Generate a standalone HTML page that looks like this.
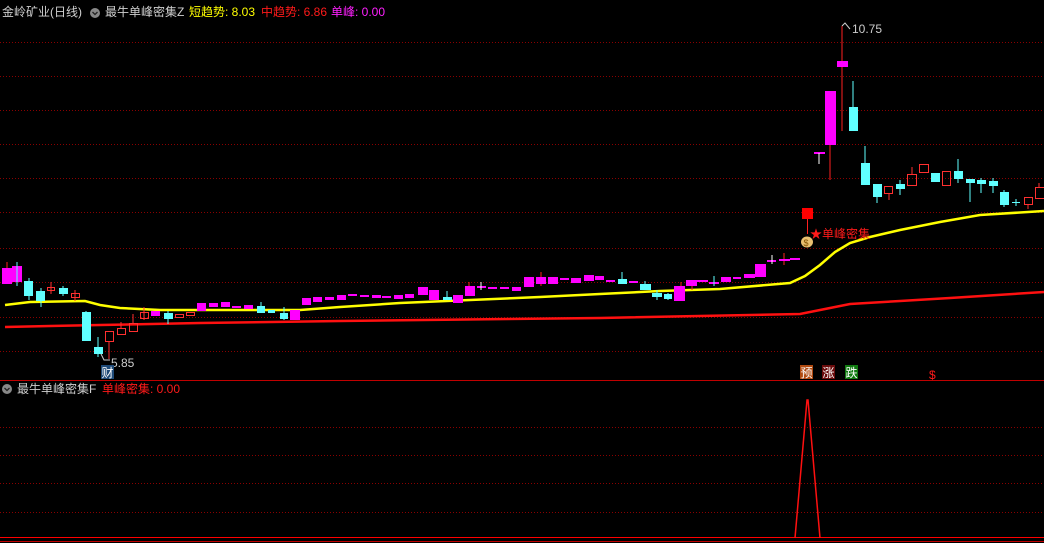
<!DOCTYPE html>
<html><head><meta charset="utf-8"><style>
html,body{margin:0;padding:0;background:#000;width:1044px;height:543px;overflow:hidden}
svg{display:block}
text{font-family:"Liberation Sans","Noto Sans CJK SC",sans-serif;font-size:12px}
</style></head><body>
<svg width="1044" height="543" viewBox="0 0 1044 543" xmlns="http://www.w3.org/2000/svg">
<g stroke="#8a0000" stroke-width="1" stroke-dasharray="1,2">
<line x1="0" y1="42.5" x2="1044" y2="42.5"/><line x1="0" y1="76.5" x2="1044" y2="76.5"/>
<line x1="0" y1="110.5" x2="1044" y2="110.5"/><line x1="0" y1="144.5" x2="1044" y2="144.5"/>
<line x1="0" y1="178.5" x2="1044" y2="178.5"/><line x1="0" y1="212.5" x2="1044" y2="212.5"/>
<line x1="0" y1="248.5" x2="1044" y2="248.5"/><line x1="0" y1="282.5" x2="1044" y2="282.5"/>
<line x1="0" y1="317.5" x2="1044" y2="317.5"/><line x1="0" y1="351.5" x2="1044" y2="351.5"/>
<line x1="0" y1="427.5" x2="1044" y2="427.5"/><line x1="0" y1="455.5" x2="1044" y2="455.5"/>
<line x1="0" y1="483.5" x2="1044" y2="483.5"/><line x1="0" y1="512.5" x2="1044" y2="512.5"/>
</g>
<line x1="0" y1="380.5" x2="1044" y2="380.5" stroke="#c00000"/>
<line x1="0" y1="537.5" x2="1044" y2="537.5" stroke="#ff0000"/>
<line x1="0" y1="541.5" x2="1044" y2="541.5" stroke="#c00000"/>

<polyline fill="none" stroke="#ffff00" stroke-width="2.5" points="5,305 30,302 85,301 100,305 120,308 160,310 300,310 340,307 400,303 470,300 540,297 600,294 660,291 720,289 790,283 805,276 820,265 835,252 850,243 870,237 900,230 940,222 980,215 1044,211"/>
<polyline fill="none" stroke="#ff1010" stroke-width="2.5" points="5,327 50,326 100,325 200,323 340,321 600,318 800,314 820,310 850,304 900,301 950,298 1044,292"/>

<g>
<g stroke="#ff2020" stroke-width="1">
<line x1="7" y1="262" x2="7" y2="268"/><line x1="842" y1="26" x2="842" y2="131"/><line x1="830" y1="145" x2="830" y2="180"/>
<line x1="469" y1="282" x2="469" y2="296"/><line x1="541" y1="272" x2="541" y2="286"/><line x1="784" y1="253" x2="784" y2="265"/>
<line x1="681" y1="282" x2="681" y2="301"/><line x1="692" y1="280" x2="692" y2="290"/>
</g>
<g fill="#ff00ff">
<rect x="2" y="268" width="10" height="16"/><rect x="12" y="266" width="10" height="16"/>
<rect x="151" y="311" width="9" height="5"/><rect x="197" y="303" width="9" height="8"/><rect x="209" y="303" width="9" height="4"/>
<rect x="221" y="302" width="9" height="5"/><rect x="232" y="306" width="9" height="2"/><rect x="244" y="305" width="9" height="4"/>
<rect x="290" y="310" width="10" height="10"/><rect x="302" y="298" width="9" height="7"/><rect x="313" y="297" width="9" height="5"/>
<rect x="325" y="297" width="9" height="3"/><rect x="337" y="295" width="9" height="5"/><rect x="348" y="294" width="9" height="2"/>
<rect x="360" y="295" width="9" height="2"/><rect x="372" y="295" width="9" height="3"/><rect x="382" y="296" width="9" height="2"/>
<rect x="394" y="295" width="9" height="4"/><rect x="405" y="294" width="9" height="4"/><rect x="418" y="287" width="10" height="8"/>
<rect x="429" y="290" width="10" height="10"/><rect x="453" y="295" width="10" height="8"/><rect x="465" y="286" width="10" height="10"/>
<rect x="477" y="286" width="9" height="2"/><rect x="488" y="287" width="9" height="2"/><rect x="500" y="287" width="9" height="2"/>
<rect x="512" y="287" width="9" height="4"/><rect x="524" y="277" width="10" height="10"/><rect x="536" y="277" width="10" height="7"/>
<rect x="548" y="277" width="10" height="7"/><rect x="560" y="278" width="9" height="2"/><rect x="571" y="278" width="10" height="5"/>
<rect x="584" y="275" width="10" height="6"/><rect x="595" y="276" width="9" height="4"/><rect x="606" y="280" width="9" height="2"/>
<rect x="629" y="281" width="9" height="2"/><rect x="674" y="286" width="11" height="15"/><rect x="686" y="280" width="11" height="6"/>
<rect x="697" y="280" width="11" height="2"/><rect x="709" y="282" width="10" height="2"/><rect x="721" y="277" width="10" height="5"/>
<rect x="733" y="277" width="8" height="2"/><rect x="744" y="274" width="11" height="4"/><rect x="755" y="264" width="11" height="13"/>
<rect x="767" y="260" width="9" height="2"/><rect x="779" y="259" width="11" height="2"/><rect x="790" y="258" width="10" height="2"/>
<rect x="814" y="152" width="11" height="2"/>
<rect x="825" y="91" width="11" height="54"/><rect x="837" y="61" width="11" height="6"/>
</g>
<g stroke="#60ffff" stroke-width="1">
<line x1="17" y1="262" x2="17" y2="286"/><line x1="29" y1="278" x2="29" y2="300"/><line x1="41" y1="288" x2="41" y2="307"/>
<line x1="63" y1="286" x2="63" y2="296"/><line x1="86" y1="311" x2="86" y2="341"/><line x1="98" y1="337" x2="98" y2="357"/>
<line x1="168" y1="311" x2="168" y2="324"/><line x1="261" y1="302" x2="261" y2="313"/><line x1="284" y1="307" x2="284" y2="320"/>
<line x1="447" y1="291" x2="447" y2="300"/><line x1="622" y1="272" x2="622" y2="284"/><line x1="645" y1="281" x2="645" y2="290"/>
<line x1="657" y1="290" x2="657" y2="300"/><line x1="668" y1="293" x2="668" y2="300"/><line x1="714" y1="276" x2="714" y2="286"/>
<line x1="853" y1="81" x2="853" y2="131"/><line x1="865" y1="146" x2="865" y2="185"/><line x1="877" y1="184" x2="877" y2="203"/>
<line x1="900" y1="180" x2="900" y2="195"/><line x1="958" y1="159" x2="958" y2="183"/><line x1="970" y1="179" x2="970" y2="202"/>
<line x1="981" y1="178" x2="981" y2="193"/><line x1="993" y1="178" x2="993" y2="193"/><line x1="1004" y1="190" x2="1004" y2="207"/>
<line x1="1016" y1="199" x2="1016" y2="206"/>
</g>
<g fill="#60ffff">
<rect x="24" y="281" width="9" height="15"/><rect x="36" y="291" width="9" height="10"/><rect x="59" y="288" width="9" height="6"/>
<rect x="82" y="312" width="9" height="29"/><rect x="94" y="347" width="9" height="7"/><rect x="164" y="313" width="9" height="6"/>
<rect x="257" y="306" width="8" height="7"/><rect x="268" y="310" width="7" height="3"/><rect x="280" y="313" width="8" height="6"/>
<rect x="443" y="297" width="9" height="3"/><rect x="618" y="279" width="9" height="5"/><rect x="640" y="284" width="11" height="6"/>
<rect x="652" y="293" width="10" height="4"/><rect x="664" y="294" width="8" height="5"/>
<rect x="849" y="107" width="9" height="24"/><rect x="861" y="163" width="9" height="22"/><rect x="873" y="184" width="9" height="13"/>
<rect x="896" y="184" width="9" height="5"/><rect x="931" y="173" width="9" height="9"/><rect x="954" y="171" width="9" height="8"/>
<rect x="966" y="179" width="9" height="4"/><rect x="977" y="180" width="9" height="4"/><rect x="989" y="181" width="9" height="5"/>
<rect x="1000" y="192" width="9" height="13"/><rect x="1012" y="202" width="8" height="1"/>
</g>
<g stroke="#ff3030" stroke-width="1" fill="none">
<line x1="51" y1="282" x2="51" y2="294"/><rect x="47.5" y="287.5" width="7" height="3"/>
<line x1="75" y1="290" x2="75" y2="301"/><rect x="71.5" y="293.5" width="8" height="4"/>
<line x1="109" y1="341" x2="109" y2="359"/><rect x="105.5" y="331.5" width="8" height="10"/>
<line x1="121" y1="322" x2="121" y2="328"/><rect x="117.5" y="328.5" width="8" height="6"/>
<line x1="133" y1="314" x2="133" y2="323"/><rect x="129.5" y="323.5" width="8" height="8"/>
<line x1="144" y1="307" x2="144" y2="320"/><rect x="140.5" y="312.5" width="8" height="6"/>
<rect x="175.5" y="314.5" width="8" height="3"/><rect x="186.5" y="312.5" width="8" height="3"/>
<line x1="889" y1="193" x2="889" y2="200"/><rect x="884.5" y="186.5" width="8" height="7"/>
<line x1="912" y1="167" x2="912" y2="174"/><rect x="907.5" y="174.5" width="9" height="11"/>
<rect x="919.5" y="164.5" width="9" height="8"/>
<rect x="942.5" y="171.5" width="8" height="14"/>
<line x1="1028" y1="204" x2="1028" y2="209"/><rect x="1024.5" y="197.5" width="8" height="7"/>
<line x1="1039" y1="183" x2="1039" y2="187"/><rect x="1035.5" y="187.5" width="9" height="11"/>
</g>
<g stroke="#fff" stroke-width="1">
<line x1="772" y1="255" x2="772" y2="264"/><line x1="819" y1="153" x2="819" y2="164"/><line x1="481" y1="282" x2="481" y2="290"/>
</g>
</g>

<rect x="802" y="208" width="11" height="11" fill="#ff0000"/>
<line x1="807.5" y1="219" x2="807.5" y2="234" stroke="#ff2020"/>
<ellipse cx="807" cy="242" rx="6" ry="5.5" fill="#e8c070"/>
<text x="803.5" y="246" fill="#805000" style="font-size:9px">$</text>
<text x="810" y="238" fill="#ff1a1a" style="font-size:12px">★单峰密集</text>

<polyline points="842,26 845,23 850,29" fill="none" stroke="#ccc"/>
<text x="852" y="33" fill="#cccccc">10.75</text>
<polyline points="101,354 104,360 110,360" fill="none" stroke="#ccc"/>
<text x="111" y="367" fill="#cccccc">5.85</text>
<rect x="101" y="365" width="13" height="14" fill="#1e4a78"/>
<text x="101.5" y="377" fill="#ffffff">财</text>

<rect x="800" y="365" width="13" height="14" fill="#b04a10"/><text x="800.5" y="377" fill="#fff">预</text>
<rect x="822" y="365" width="13" height="14" fill="#6a0c0c"/><text x="822.5" y="377" fill="#fff">涨</text>
<rect x="845" y="365" width="13" height="14" fill="#107a10"/><text x="845.5" y="377" fill="#fff">跌</text>
<text x="929" y="379" fill="#ff1a1a">$</text>

<text x="2" y="16" fill="#d0d0d0">金岭矿业(日线)</text>
<circle cx="95" cy="13" r="5" fill="#888"/><path d="M92.5 12 L95 14.5 L97.5 12" fill="none" stroke="#222" stroke-width="1.3"/>
<text x="105" y="16" fill="#d0d0d0">最牛单峰密集Z</text>
<text x="189" y="16" fill="#ffff00">短趋势: 8.03</text>
<text x="261" y="16" fill="#ff1a1a">中趋势: 6.86</text>
<text x="331" y="16" fill="#ff20ff">单峰: 0.00</text>

<circle cx="7" cy="389" r="5" fill="#888"/><path d="M4.5 388 L7 390.5 L9.5 388" fill="none" stroke="#222" stroke-width="1.3"/>
<text x="17" y="393" fill="#d0d0d0">最牛单峰密集F</text>
<text x="102" y="393" fill="#ff1a1a">单峰密集: 0.00</text>

<polyline points="795,538 807,400 808,400 820,538" fill="none" stroke="#ff1010" stroke-width="1.5"/>
</svg>
</body></html>
